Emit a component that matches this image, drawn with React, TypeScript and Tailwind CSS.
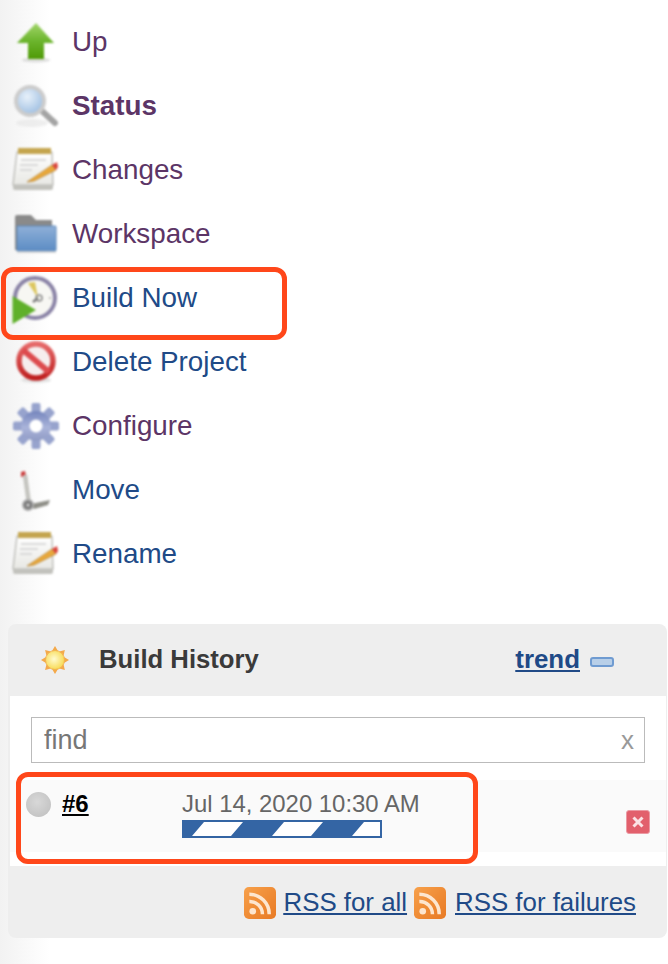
const FONT = "font-['Liberation_Sans',Arial,sans-serif]";
const PURPLE = "text-[#5c3566]";
const BLUE = "text-[#204a87]";

function UpIcon() {
  return (
    <svg width="40" height="44" viewBox="0 0 40 44">
      <defs>
        <linearGradient id="up" x1="0" y1="0" x2="0" y2="1">
          <stop offset="0" stopColor="#a2d56a" />
          <stop offset="0.5" stopColor="#6cb52d" />
          <stop offset="1" stopColor="#4e9a06" />
        </linearGradient>
      </defs>
      <ellipse cx="20" cy="40" rx="14" ry="2.5" fill="#ccc" opacity="0.6" />
      <path d="M20 3 L38 23 L28 23 L28 39 L12 39 L12 23 L1 23 Z" fill="url(#up)" />
    </svg>
  );
}

function SearchIcon() {
  return (
    <svg width="48" height="46" viewBox="0 0 48 46">
      <defs>
        <radialGradient id="lens" cx="0.4" cy="0.35" r="0.8">
          <stop offset="0" stopColor="#e8f1fa" />
          <stop offset="1" stopColor="#8fb4dc" />
        </radialGradient>
      </defs>
      <ellipse cx="20" cy="40" rx="16" ry="4" fill="#e4e4e4" opacity="0.6" />
      <path d="M30 28 L43 40" stroke="#a4a4a4" strokeWidth="6" strokeLinecap="round" />
      <circle cx="18" cy="18" r="14" fill="url(#lens)" stroke="#cccccc" strokeWidth="4" />
    </svg>
  );
}

function NotepadIcon({ id }: { id: string }) {
  return (
    <svg width="48" height="46" viewBox="0 0 48 46">
      <defs>
        <linearGradient id={id} x1="0" y1="0" x2="0" y2="1">
          <stop offset="0" stopColor="#fff" />
          <stop offset="1" stopColor="#e8e8e4" />
        </linearGradient>
      </defs>
      <path d="M5 5 H40 L41 38 H1 Z" fill={`url(#${id})`} stroke="#b4b4af" strokeWidth="1.2" />
      <path d="M1 38 H41 V41 Q41 43 39 43 H3 Q1 43 1 41 Z" fill="#c2c2bd" />
      <rect x="6" y="1" width="33" height="6" fill="#c4a54e" />
      <path d="M9 13 H34 M8 18 H26 M8 23 H20" stroke="#cfcfcf" strokeWidth="1.5" />
      <path d="M15 35 L40 18 L44 23 L22 34 Z" fill="#e9a83a" stroke="#a5742a" strokeWidth="0.6" />
      <path d="M40 18 L45 15 L46 20 L44 23 Z" fill="#d9423a" />
    </svg>
  );
}

function FolderIcon() {
  return (
    <svg width="44" height="40" viewBox="0 0 44 40">
      <defs>
        <linearGradient id="folder" x1="0" y1="0" x2="0" y2="1">
          <stop offset="0" stopColor="#8fb0d8" />
          <stop offset="1" stopColor="#5c8cc4" />
        </linearGradient>
      </defs>
      <path d="M1 3 Q1 1 3 1 H17 L22 6 H38 V14 H4 V36 H1 Z" fill="#8a8a8a" />
      <path d="M3 12 H41 Q42 12 42 13 V36 Q42 37 41 37 H3 Z" fill="url(#folder)" stroke="#5a86b8" strokeWidth="1" />
      <path d="M3 38 H42" stroke="#cccccc" strokeWidth="1.5" />
    </svg>
  );
}

function BuildIcon() {
  return (
    <svg width="48" height="52" viewBox="0 0 48 52">
      <circle cx="23" cy="26" r="20" fill="#f7f7f3" stroke="#8a83a6" strokeWidth="4" />
      <path d="M16 11 L23 10 L26 26 Z" fill="#dcc65e" />
      <path d="M26 26 L21 30" stroke="#777" strokeWidth="2.5" />
      <circle cx="27" cy="26" r="3" fill="none" stroke="#888" strokeWidth="1.5" />
      <circle cx="38" cy="26" r="1" fill="#aaa" />
      <path d="M0.5 24 L0.5 52 L24 38 Z" fill="#5fb02a" />
    </svg>
  );
}

function DeleteIcon() {
  return (
    <svg width="44" height="44" viewBox="0 0 44 44">
      <defs>
        <linearGradient id="ban" x1="0" y1="0" x2="0" y2="1">
          <stop offset="0" stopColor="#e66a6a" />
          <stop offset="1" stopColor="#bf2020" />
        </linearGradient>
      </defs>
      <ellipse cx="22" cy="40" rx="15" ry="3" fill="#e2e2e2" />
      <circle cx="22" cy="21" r="17" fill="#f6eeee" stroke="url(#ban)" strokeWidth="5.5" />
      <path d="M9 10 L35 32" stroke="#dd4a4d" strokeWidth="6" />
    </svg>
  );
}

function GearIcon() {
  const teeth = [0, 45, 90, 135, 180, 225, 270, 315];
  return (
    <svg width="48" height="48" viewBox="0 0 48 48">
      <defs>
        <linearGradient id="gear" x1="0" y1="0" x2="0" y2="1">
          <stop offset="0" stopColor="#7585bd" />
          <stop offset="0.55" stopColor="#aab4da" />
          <stop offset="1" stopColor="#8f9ac4" />
        </linearGradient>
      </defs>
      {teeth.map((a) => (
        <rect key={a} x="19.5" y="1" width="9" height="12" rx="2" transform={`rotate(${a} 24 24)`} fill="#97a3cd" />
      ))}
      <circle cx="24" cy="24" r="15" fill="url(#gear)" />
      <circle cx="24" cy="24" r="6.5" fill="#fff" />
    </svg>
  );
}

function MoveIcon() {
  return (
    <svg width="40" height="44" viewBox="0 0 40 44">
      <path d="M5 4 L9 3 L10 8 L5 9 Z" fill="#cc3a3a" />
      <path d="M9 7 L13 36" stroke="#c4c4bf" strokeWidth="4.5" />
      <path d="M15 36 L34 32 L32 37 L18 41 Z" fill="#8f8f88" />
      <circle cx="12" cy="37" r="5" fill="#777" stroke="#aaa" strokeWidth="2" />
      <circle cx="12" cy="37" r="1.5" fill="#ddd" />
    </svg>
  );
}

function SunIcon() {
  const rays = [0, 45, 90, 135, 180, 225, 270, 315];
  return (
    <svg width="30" height="30" viewBox="0 0 30 30" className="blur-[0.7px]">
      <defs>
        <radialGradient id="sun" cx="0.45" cy="0.45" r="0.6">
          <stop offset="0" stopColor="#fffbd0" />
          <stop offset="1" stopColor="#f7d84a" />
        </radialGradient>
      </defs>
      {rays.map((a) => (
        <path key={a} d="M12 6 L15 1 L18 6 Z" fill="#f4a94a" transform={`rotate(${a} 15 15)`} />
      ))}
      <circle cx="15" cy="15" r="9.5" fill="url(#sun)" stroke="#f2b350" strokeWidth="1" />
    </svg>
  );
}

function RssIcon({ id }: { id: string }) {
  return (
    <svg width="32" height="32" viewBox="0 0 33 33" className="shrink-0 blur-[0.6px]">
      <defs>
        <linearGradient id={id} x1="0" y1="0" x2="1" y2="1">
          <stop offset="0" stopColor="#f7a04a" />
          <stop offset="1" stopColor="#e87a24" />
        </linearGradient>
      </defs>
      <rect width="33" height="33" rx="5" fill={`url(#${id})`} />
      <circle cx="9" cy="25" r="3.4" fill="#fde6cf" />
      <path d="M5.5 15 A13 13 0 0 1 19 28" fill="none" stroke="#fde6cf" strokeWidth="3.6" />
      <path d="M5.5 7.5 A20.5 20.5 0 0 1 26 28" fill="none" stroke="#fde6cf" strokeWidth="3.6" />
    </svg>
  );
}

function ProgressBar() {
  return (
    <svg width="200" height="18" viewBox="0 0 200 18" className="mt-[1px] block">
      <rect width="200" height="18" fill="#3465a4" />
      <path d="M22 2 H61 L49 16 H10 Z M102 2 H141 L129 16 H90 Z M182 2 H198 V16 H170 Z" fill="#ffffff" />
    </svg>
  );
}

function Row({ icon, label, color, bold }: { icon: React.ReactNode; label: string; color: string; bold?: boolean }) {
  return (
    <div className="flex h-16 items-center">
      <div className="flex w-[72px] shrink-0 items-center justify-center px-[4px] blur-[0.9px]">{icon}</div>
      <a className={`text-[27.8px] leading-none ${color} ${bold ? "font-bold" : ""}`}>{label}</a>
    </div>
  );
}

export default function App() {
  return (
    <div className={`relative h-[964px] w-[668px] overflow-hidden bg-[linear-gradient(to_right,#f2f2f2,#ffffff_50px)] ${FONT}`}>
      <div className="pt-[10px]">
        <Row icon={<UpIcon />} label="Up" color={PURPLE} />
        <Row icon={<SearchIcon />} label="Status" color={PURPLE} bold />
        <Row icon={<NotepadIcon id="pad1" />} label="Changes" color={PURPLE} />
        <Row icon={<FolderIcon />} label="Workspace" color={PURPLE} />
        <Row icon={<BuildIcon />} label="Build Now" color={BLUE} />
        <Row icon={<DeleteIcon />} label="Delete Project" color={BLUE} />
        <Row icon={<GearIcon />} label="Configure" color={PURPLE} />
        <Row icon={<MoveIcon />} label="Move" color={BLUE} />
        <Row icon={<NotepadIcon id="pad2" />} label="Rename" color={BLUE} />
      </div>

      <div className="ml-2 mt-[38px] w-[659px] rounded-lg bg-[#eeeeee] pl-[2px] pr-px">
        <div className="flex h-[72px] items-center pb-[2px]">
          <div className="ml-[30px] mt-[2px] flex w-[59px] shrink-0"><SunIcon /></div>
          <div className="text-[25.7px] font-bold text-[#3a3a3a]">Build History</div>
          <a className={`ml-auto text-[25.9px] font-bold underline ${BLUE}`}>trend</a>
          <div className="ml-[10px] mr-[52px] mt-[5px] h-[10px] w-[24px] rounded-[3px] border-2 border-[#6f9bd1] bg-[#b8cfe8] blur-[0.6px]" />
        </div>

        <div className="h-[170px] bg-white pt-[21px]">
          <div className="ml-[21px] flex h-[46px] w-[614px] items-center justify-between border border-[#bbbbbb] bg-white pl-[12px] pr-[10px]">
            <span className="text-[27px] text-[#777777]">find</span>
            <span className="mt-[1px] text-[26px] text-[#999999]">x</span>
          </div>
          <div className="mt-[17px] flex h-[72px] bg-[#fafafa]">
            <div className="ml-[16px] mt-[12px] h-[25px] w-[25px] shrink-0 rounded-full bg-[radial-gradient(circle_at_45%_40%,#d8d8d8,#bdbdbd)] blur-[0.7px]" />
            <a className="ml-[11px] mt-[9px] w-[120px] text-[24px] leading-[30px] font-bold text-black underline">#6</a>
            <div className="pt-[9px]">
              <div className="text-[23.9px] leading-[30px] text-[#666666]">Jul 14, 2020 10:30 AM</div>
              <ProgressBar />
            </div>
            <div className="ml-auto mr-[16px] mt-[30px] flex h-[24px] w-[24px] items-center justify-center rounded-[3px] border border-[#eb9aa3] bg-[#e2606c] blur-[0.6px]">
              <svg width="14" height="14" viewBox="0 0 14 14">
                <path d="M2.5 2.5 L11.5 11.5 M11.5 2.5 L2.5 11.5" stroke="#fbe3e5" strokeWidth="3" />
              </svg>
            </div>
          </div>
        </div>

        <div className="flex h-[72px] items-center justify-end pr-[30px] pt-[1px] text-[25.85px] underline text-[#204a87]">
          <RssIcon id="rss1" />
          <a className="ml-[8px]">RSS for all</a>
          <span className="ml-[7px] flex"><RssIcon id="rss2" /></span>
          <a className="ml-[9px]">RSS for failures</a>
        </div>
      </div>

      {/* annotation boxes drawn on top of the screenshot */}
      <div className="absolute left-[1px] top-[267px] h-[73px] w-[286px] rounded-[12px] border-[5px] border-[#ff471a]" />
      <div className="absolute left-[16px] top-[772px] h-[92px] w-[462px] rounded-[12px] border-[5px] border-[#ff471a]" />
    </div>
  );
}
